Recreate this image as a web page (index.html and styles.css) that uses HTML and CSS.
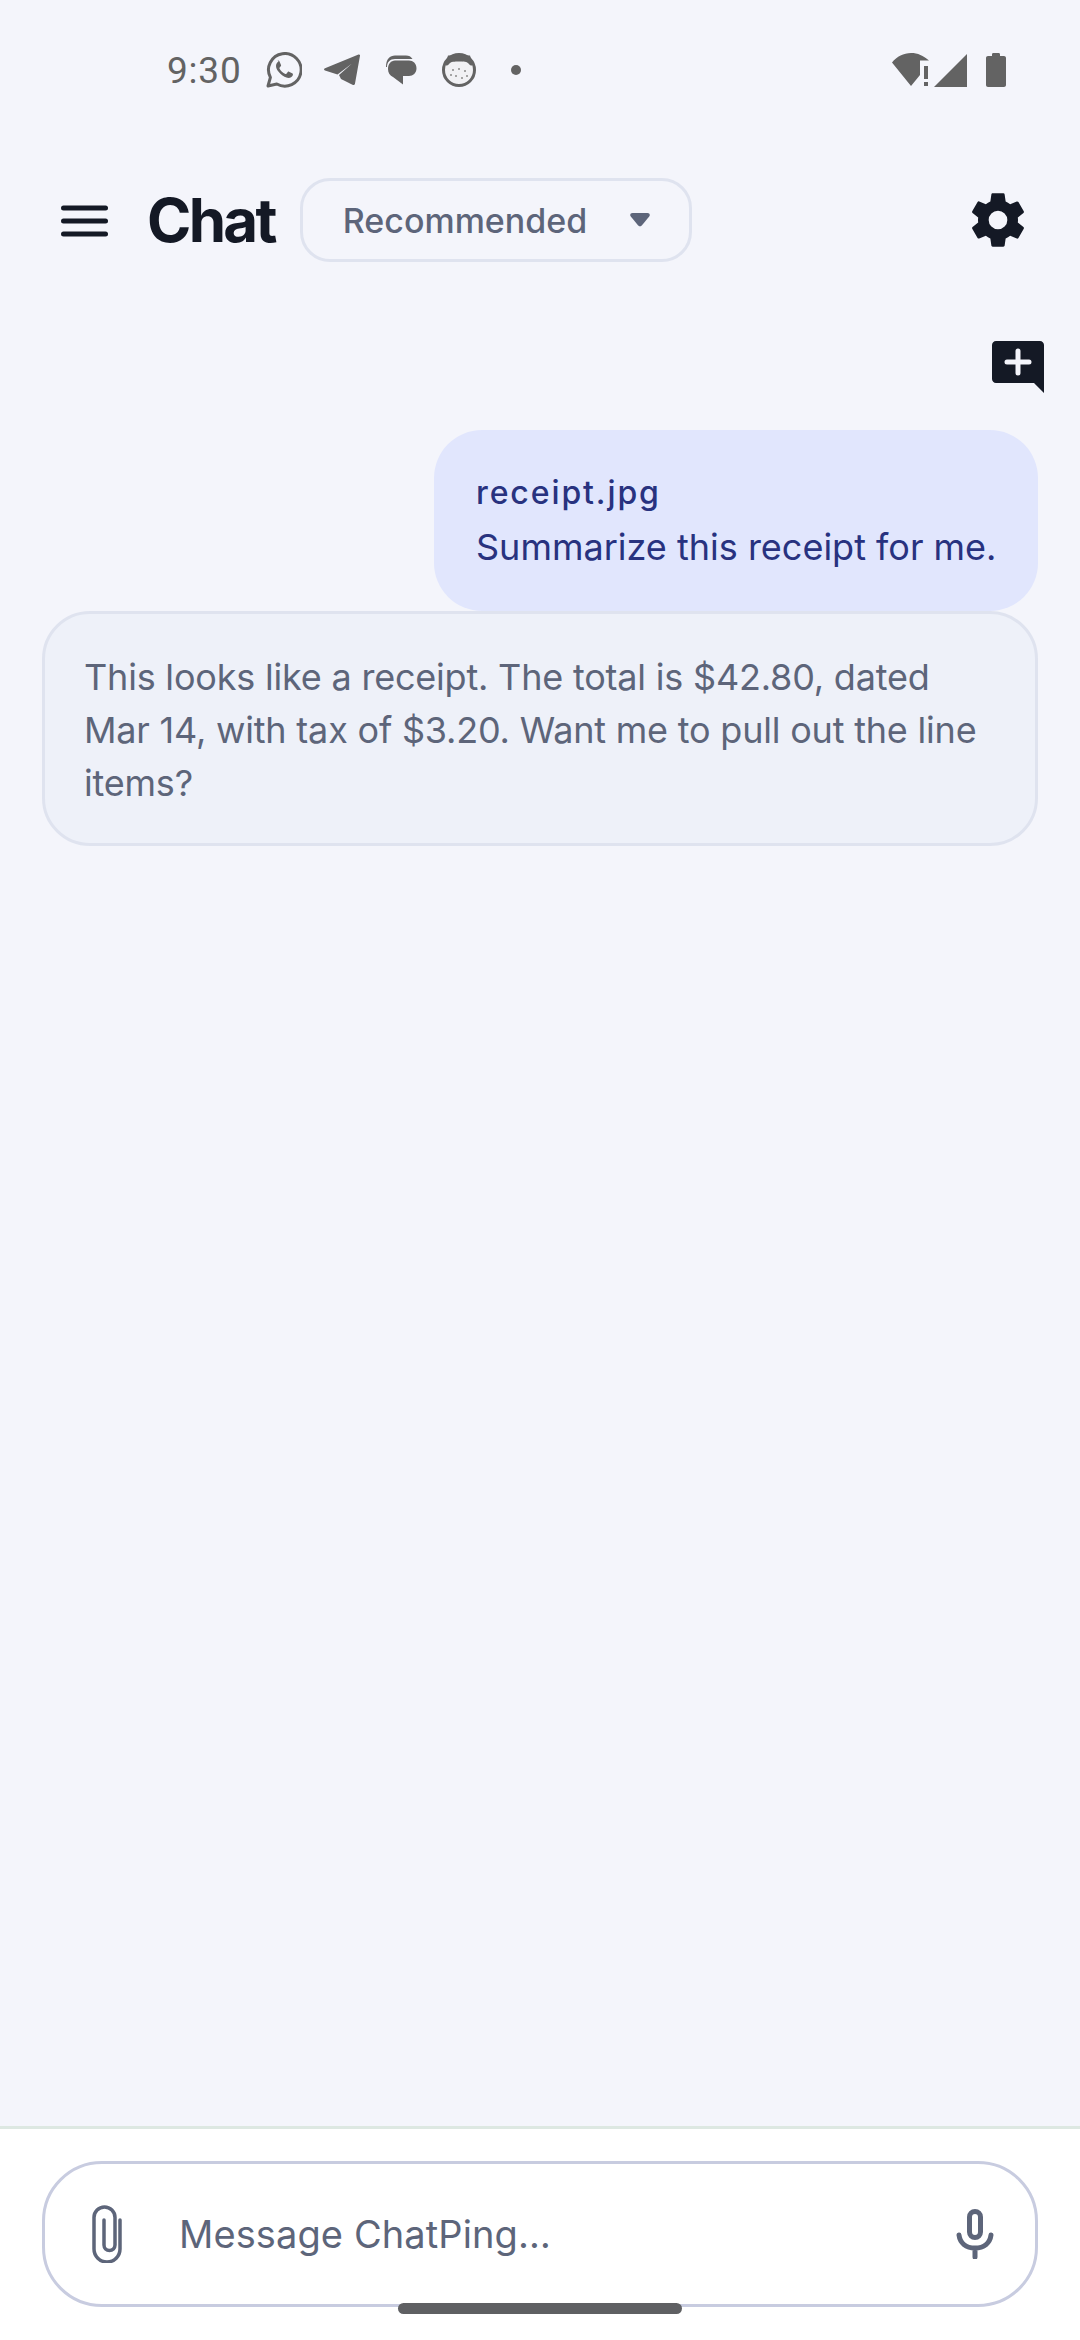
FILE: index.html
```html
<!DOCTYPE html>
<html lang="en">
<head>
<meta charset="utf-8">
<title>Chat</title>
<link rel="stylesheet" href="styles.css">
</head>
<body>
<div class="screen">
  <div class="status">
    <div class="status-left">
      <span class="time">9:30</span>
      <svg class="si wa" viewBox="0 0 36 36"><path d="M2 34l2.400-8.600A16.300 16.300 0 1 1 10.800 32z" fill="none" stroke="#636363" stroke-width="3" stroke-linejoin="round"/><path d="M12.600 9.600c-1 .2-2.600 2-2.600 4.400 0 2.600 1.800 5.200 4.400 7.800 2.800 2.700 5.400 4 8 4.200 2.400 0 4.200-1.500 4.500-3 .1-.8 0-1.300-.3-1.500l-3.600-1.800c-.5-.2-.9-.1-1.200.3l-1.400 1.800c-.3.3-.6.3-1 .2-2.600-1-4.700-3-5.900-5.500-.2-.4-.1-.7.2-1l1.200-1.500c.2-.3.3-.7.1-1.100l-1.500-3.500c-.3-.6-1.400-.9-1.900-.8z" fill="#636363"/></svg>
      <svg class="si tg" viewBox="0 0 36 32"><path d="M34.500.5c1-.3 1.600.3 1.500 1.200L31 29.500c-.2 1.400-1.300 1.800-2.500 1.200L17 25l-2-4L28 9.500 13.500 20.500 1 16.500c-1.300-.5-1.300-1.700 0-2.200z" fill="#636363"/></svg>
      <svg class="si msg" viewBox="0 0 32 32"><path d="M1 13C1 5 5 1.500 10 1.500h11c3 0 5 1 6.500 3.500H10C5 5 2 8 2 13z" fill="#636363"/><path d="M10 6.500h14c4 0 7.500 3 7.500 7.800s-3.500 7.700-7.500 7.700h-6v8.500L8 23c-3-1.500-5-4-5-8 0-5 3-8.500 7-8.500z" fill="#636363"/></svg>
      <svg class="si gh" viewBox="0 0 36 36"><circle cx="18" cy="18" r="15.500" fill="#f1f1f4" stroke="#636363" stroke-width="3"/><path d="M7 3.500h22l3 9.500c-1.500 1-3 .5-4-1-2-2.500-5.500-2.500-10-2.500s-8 0-10 2.500c-1 1.500-2.500 2-4 1z" fill="#636363"/><g fill="#8a8a8a"><circle cx="12" cy="18" r="1"/><circle cx="18" cy="17" r="1"/><circle cx="24" cy="19" r="1"/><circle cx="15" cy="24" r="1"/><circle cx="21" cy="26" r="1"/><circle cx="26" cy="24" r="1"/><circle cx="10" cy="23" r="1"/></g></svg>
      <span class="dot"></span>
    </div>
    <div class="status-right">
      <svg class="si wifi" viewBox="0 0 38 34"><path d="M0 9.500C5 3.500 11.500 0 19 0c7 0 12 2.500 18 7.500h-9v14.500L19 33z" fill="#636363"/><rect x="32" y="13" width="4" height="13" fill="#636363"/><rect x="32" y="29" width="4" height="4" fill="#636363"/></svg>
      <svg class="si sig" viewBox="0 0 33 33"><path d="M33 0v33H0z" fill="#636363"/></svg>
      <svg class="si bat" viewBox="0 0 20 34"><path d="M6 3V1.500C6 .7 6.500 0 7.300 0h5.400c.8 0 1.300.7 1.300 1.500V3h4c1.100 0 2 .9 2 2v27c0 1.100-.9 2-2 2H2c-1.100 0-2-.9-2-2V5c0-1.100.9-2 2-2z" fill="#636363"/></svg>
    </div>
  </div>

  <div class="header">
    <svg class="menu" viewBox="0 0 47 33"><g fill="none" stroke="#141925" stroke-width="5" stroke-linecap="round"><path d="M2.500 4h42"/><path d="M2.500 17h42"/><path d="M2.500 30h42"/></g></svg>
    <h1 class="title">Chat</h1>
    <div class="chip"><span class="chip-text">Recommended</span><svg class="caret" viewBox="0 0 20 14"><path d="M2.500 0h15c2 0 3 2 1.700 3.600l-7.400 9c-1 1.100-2.600 1.100-3.600 0l-7.400-9C-.5 2 .5 0 2.500 0z" fill="#5d657a"/></svg></div>
    <svg class="gear" viewBox="0 0 24 24"><path fill="#141925" d="M19.430 12.980c.04-.32.070-.64.070-.98s-.03-.66-.07-.98l2.110-1.650c.19-.15.240-.42.120-.64l-2-3.460c-.12-.22-.39-.3-.61-.22l-2.490 1c-.52-.4-1.080-.73-1.690-.98l-.38-2.650A.49.49 0 0 0 14 2h-4c-.25 0-.46.18-.49.42l-.38 2.650c-.61.25-1.170.59-1.690.98l-2.490-1c-.23-.09-.49 0-.61.22l-2 3.460c-.13.22-.07.49.12.64l2.110 1.650c-.04.32-.07.65-.07.98s.03.66.07.98l-2.110 1.650c-.19.15-.24.42-.12.64l2 3.460c.12.22.39.3.61.22l2.490-1c.52.4 1.080.73 1.690.98l.38 2.650c.03.24.24.42.49.42h4c.25 0 .46-.18.49-.42l.38-2.650c.61-.25 1.170-.59 1.690-.98l2.490 1c.23.09.49 0 .61-.22l2-3.460c.12-.22.07-.49-.12-.64l-2.110-1.650zM12 15.500a3.500 3.500 0 1 1 0-7 3.500 3.500 0 0 1 0 7z"/></svg>
  </div>

  <div class="new-row">
    <svg class="new-chat" viewBox="0 0 52 52"><path fill="#141925" d="M4 0h44c2.200 0 4 1.800 4 4v48L42 42H4c-2.200 0-4-1.800-4-4V4c0-2.200 1.800-4 4-4z"/><path d="M26 10v22M15 21h22" stroke="#f4f5fb" stroke-width="5" stroke-linecap="round" fill="none"/></svg>
  </div>

  <div class="messages">
    <div class="bubble user">
      <div class="file">receipt.jpg</div>
      <div class="user-text">Summarize this receipt for me.</div>
    </div>
    <div class="bubble bot">This looks like a receipt. The total is $42.80, dated Mar 14, with tax of $3.20. Want me to pull out the line items?</div>
  </div>

  <div class="composer">
    <div class="input">
      <svg class="clip" viewBox="0 0 30 58"><path d="M28 15v29a13 13 0 0 1-26 0V12.500a10.500 10.500 0 0 1 21 0V40a5.500 5.500 0 0 1-11 0V15" fill="none" stroke="#5d657a" stroke-width="3.500" stroke-linecap="round"/></svg>
      <span class="placeholder">Message ChatPing…</span>
      <svg class="mic" viewBox="0 0 38 50"><rect x="13.500" y="2.500" width="11" height="26" rx="5.500" fill="none" stroke="#5d657a" stroke-width="5"/><path d="M3 26c1 8 7 13 16 13s15-5 16-13M19 39v9" fill="none" stroke="#5d657a" stroke-width="5" stroke-linecap="round"/></svg>
    </div>
  </div>
  <div class="home-bar"></div>
</div>
</body>
</html>
```

FILE: styles.css
```css
* { box-sizing: border-box; }
html, body { margin: 0; padding: 0; }
body { width: 1080px; height: 2340px; overflow: hidden; font-family: "Inter", "Liberation Sans", sans-serif; }
.screen { position: relative; width: 1080px; height: 2340px; background: #f4f5fb; display: flex; flex-direction: column; }

.status { height: 140px; padding: 0 74px 0 167px; display: flex; align-items: center; justify-content: space-between; flex: none; }
.status-left, .status-right { display: flex; align-items: center; }
.time { font-family: "Roboto", sans-serif; font-size: 37px; color: #636363; width: 99px; letter-spacing: .8px; }
.si { display: block; flex: none; }
.wa { width: 36px; height: 36px; margin-right: 22px; }
.tg { width: 36px; height: 32px; margin-right: 25px; }
.msg { width: 32px; height: 32px; margin-right: 24px; }
.gh { width: 36px; height: 36px; margin-right: 34px; }
.dot { width: 10px; height: 10px; border-radius: 50%; background: #636363; }
.wifi { width: 38px; height: 34px; margin-right: 4px; }
.sig { width: 33px; height: 33px; margin-right: 19px; }
.bat { width: 20px; height: 34px; }

.header { height: 160px; flex: none; padding: 0 50px 0 61px; display: flex; align-items: center; }
.menu { width: 47px; height: 33px; flex: none; margin-right: 39px; }
.title { margin: 0 25px 0 0; font-size: 60px; line-height: 1; font-weight: 700; color: #141925; letter-spacing: -2.700px; }
.chip { width: 392px; height: 84px; border: 3px solid #dfe3ef; border-radius: 30px; display: flex; align-items: center; padding: 0 40px; justify-content: space-between; }
.chip-text { font-size: 34px; font-weight: 500; color: #5d657a; }
.caret { width: 20px; height: 14px; flex: none; margin-right: -1px; }
.gear { width: 64px; height: 64px; margin-left: auto; flex: none; }

.new-row { display: flex; justify-content: flex-end; padding: 0 36px 0 0; flex: none; margin-top: 41px; }
.new-chat { width: 52px; height: 52px; display: block; }

.messages { flex: 1; padding: 37px 42px 0; display: flex; flex-direction: column; align-items: flex-end; }
.bubble { border-radius: 48px; }
.user { width: 604px; height: 181px; background: #e1e6fd; padding: 42px; color: #28327f; }
.file { font-size: 32px; line-height: 42px; font-weight: 500; letter-spacing: 1.900px; margin-bottom: 7px; }
.user-text { font-size: 36px; line-height: 53px; white-space: nowrap; }
.bot { width: 996px; height: 235px; background: #eef1f9; border: 3px solid #dfe3ef; padding: 37px 44px 37px 39px; font-size: 36px; line-height: 53px; color: #5d657a; letter-spacing: -.2px; }

.composer { height: 214px; flex: none; background: #fff; border-top: 3px solid #dde8e2; padding: 32px 42px 0; }
.input { height: 146px; border: 3px solid #c8cce0; border-radius: 60px; display: flex; align-items: center; padding: 0 41px 0 47px; }
.clip { width: 30px; height: 58px; flex: none; margin-right: 57px; }
.placeholder { flex: 1; font-size: 38px; color: #5d657a; letter-spacing: .1px; }
.mic { width: 38px; height: 50px; flex: none; }

.home-bar { position: absolute; left: 398px; top: 2303px; width: 284px; height: 11px; border-radius: 6px; background: #5f6063; }
```
